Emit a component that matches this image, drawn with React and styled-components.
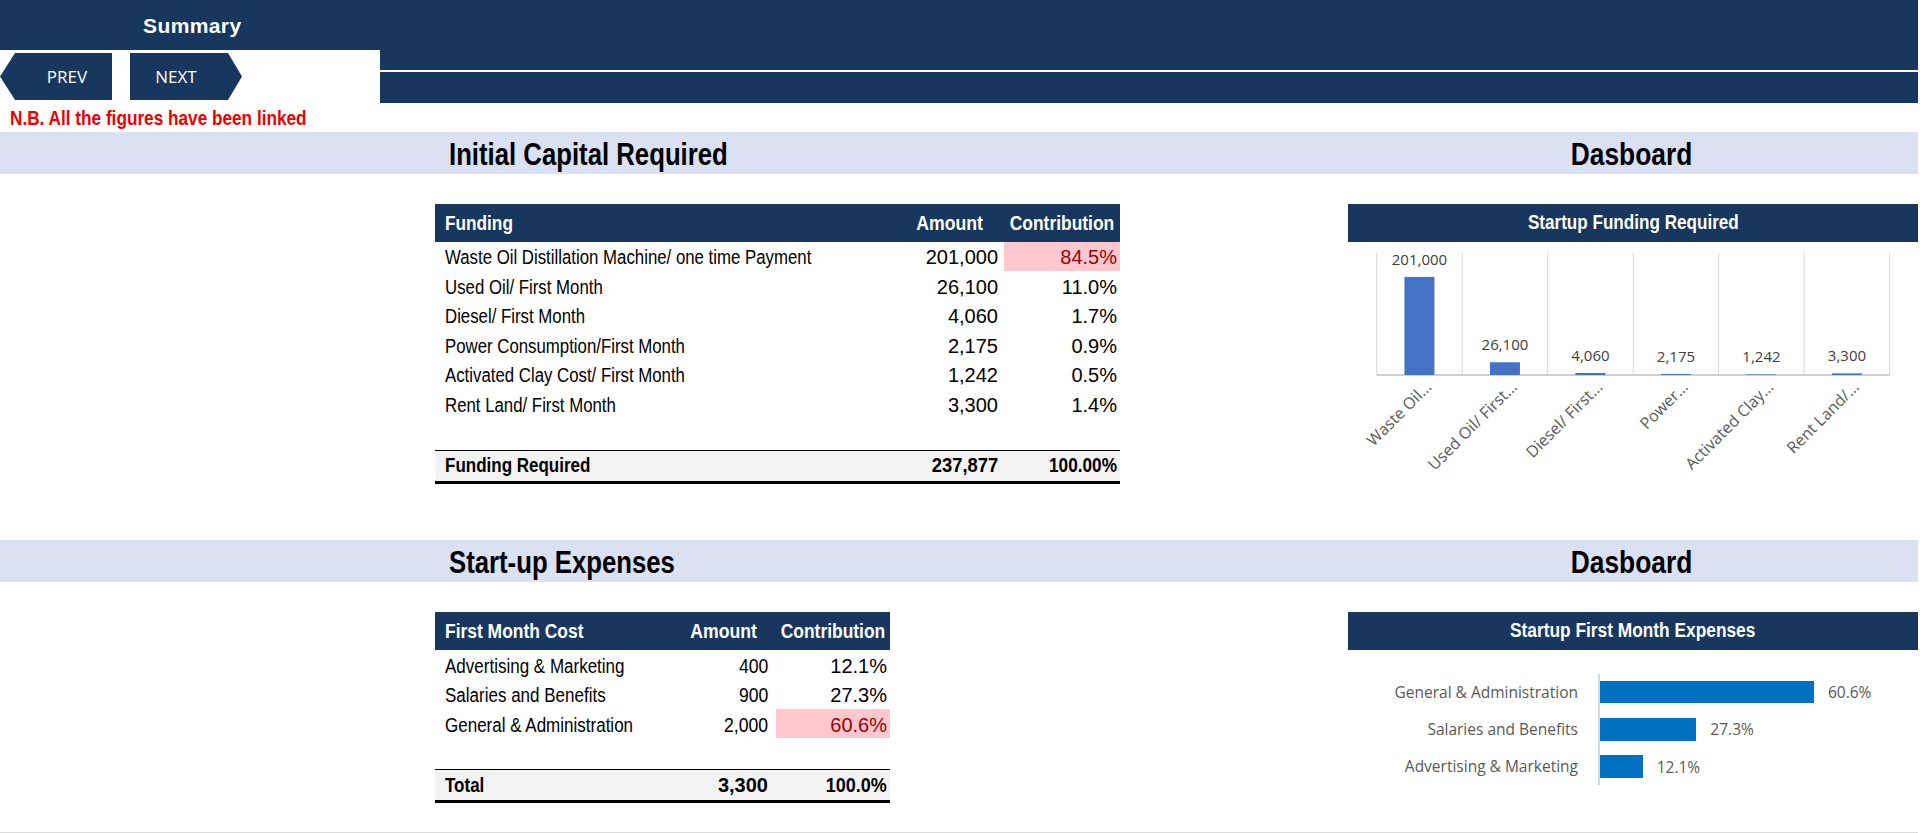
import styled, { createGlobalStyle } from 'styled-components';

const navy = '#17375e';
const sans = '"Liberation Sans", Arial, sans-serif';
const chartFont = '"Open Sans", "Noto Sans", sans-serif';

const GlobalStyle = createGlobalStyle`
  html, body {
    margin: 0;
    padding: 0;
    background: #fff;
  }

  body {
    font-family: ${sans};
  }
`;

// Arial Narrow is not installed, so condensed text is Liberation Sans squeezed sideways
const Squeeze = styled.span`
  display: inline-block;
  white-space: nowrap;
  transform: scaleX(${p => p.$x || 0.83});
  transform-origin: ${p => p.$origin || 'left'} center;
`;

const Page = styled.div`
  width: 1918px;
  height: 832px;
  border-bottom: 1px solid #dcdcdc;
  overflow: hidden;
`;

const TopBand = styled.div`
  height: 50px;
  background: ${navy};
  padding: 2px 0 0 143px;
  box-sizing: border-box;
  font-weight: bold;
  font-size: 21px;
  line-height: 48px;
  letter-spacing: 0.4px;
  color: #fff;
`;

const NavRow = styled.div`
  display: flex;
  height: 53px;
`;

const NavButtons = styled.div`
  width: 380px;
  display: flex;
  gap: 18px;
  padding-top: 3px;
  box-sizing: border-box;
`;

const NavButton = styled.div`
  width: 112px;
  height: 47px;
  background: ${navy};
  color: #fff;
  font-family: ${chartFont};
  font-size: 17px;
  display: flex;
  align-items: center;
  justify-content: center;
  box-sizing: border-box;
  padding: ${p => (p.$dir === 'prev' ? '0 0 0 22px' : '0 20px 0 0')};
  clip-path: ${p =>
    p.$dir === 'prev'
      ? 'polygon(15px 0, 100% 0, 100% 100%, 15px 100%, 0 50%)'
      : 'polygon(0 0, calc(100% - 14px) 0, 100% 50%, calc(100% - 14px) 100%, 0 100%)'};
`;

const NavStrip = styled.div`
  flex: 1;
  display: flex;
  flex-direction: column;
  gap: 2px;
  margin-top: -3px;

  .upper {
    height: 23px;
    background: ${navy};
  }

  .lower {
    flex: 1;
    background: ${navy};
  }
`;

const Note = styled.div`
  height: 29px;
  padding: 2px 0 0 10px;
  box-sizing: border-box;
  font-weight: bold;
  font-size: 20px;
  line-height: 27px;
  color: #ee0000;
`;

const Columns = styled.div`
  display: grid;
  grid-template-columns: 435px 913px 570px;
`;

const Band = styled(Columns)`
  height: 42px;
  padding-top: 3px;
  box-sizing: border-box;
  background: #d9e1f2;
  font-weight: bold;
  font-size: 31px;
  line-height: 39px;
  color: #000;

  .left-title {
    padding-left: 14px;
  }

  .right-title {
    text-align: center;
    padding-right: 4px;
  }
`;

const Body = styled(Columns)`
  height: ${p => p.$height}px;
  padding-top: 30px;
  box-sizing: border-box;
`;

const Table = styled.div`
  width: ${p => p.$width}px;
  font-size: 20px;
  color: #000;
`;

const Row = styled.div`
  display: grid;
  grid-template-columns: ${p => p.$cols};
  height: 29.5px;
  align-items: stretch;
`;

const HeadRow = styled(Row)`
  height: 37.5px;
  background: ${navy};
  color: #fff;
  font-weight: bold;
  font-size: 21px;
`;

const Spacer = styled.div`
  height: 31px;
`;

const TotalRow = styled(Row)`
  height: 34px;
  background: #f2f2f2;
  border-top: 1px solid #000;
  border-bottom: 3px solid #000;
  box-sizing: border-box;
  font-weight: bold;
`;

const Cell = styled.div`
  display: flex;
  align-items: center;
  justify-content: ${p => (p.$align === 'right' ? 'flex-end' : p.$align === 'center' ? 'center' : 'flex-start')};
  padding: ${p => p.$pad || '0'};
  background: ${p => (p.$pink ? '#ffc7ce' : 'transparent')};
  color: ${p => (p.$pink ? '#9c0006' : 'inherit')};
  white-space: nowrap;
`;

const ChartBox = styled.div`
  width: 570px;
`;

const ChartHead = styled.div`
  height: 37.5px;
  background: ${navy};
  color: #fff;
  font-weight: bold;
  font-size: 20px;
  line-height: 37.5px;
  text-align: center;
`;

const ColumnSvg = styled.svg`
  display: block;
  font-family: ${chartFont};
`;

const BarList = styled.div`
  padding-top: 24px;
  font-family: ${chartFont};
  font-size: 15.5px;
  color: #595959;
`;

const BarRow = styled.div`
  display: grid;
  grid-template-columns: 250px 1fr;
  height: 37.3px;
`;

const BarLabel = styled.div`
  text-align: right;
  padding-right: 20px;
  line-height: 37.3px;
  white-space: nowrap;
`;

const BarPlot = styled.div`
  display: flex;
  align-items: center;
  gap: 14px;
  border-left: 2px solid #d9d9d9;
`;

const Bar = styled.div`
  height: 22.5px;
  background: #0070c0;
`;

const funding = [
  { name: 'Waste Oil Distillation Machine/ one time Payment', short: 'Waste Oil...', amount: '201,000', value: 201000, pct: '84.5%', pink: true },
  { name: 'Used Oil/ First Month', short: 'Used Oil/ First...', amount: '26,100', value: 26100, pct: '11.0%' },
  { name: 'Diesel/ First Month', short: 'Diesel/ First...', amount: '4,060', value: 4060, pct: '1.7%' },
  { name: 'Power Consumption/First Month', short: 'Power...', amount: '2,175', value: 2175, pct: '0.9%' },
  { name: 'Activated Clay Cost/ First Month', short: 'Activated Clay...', amount: '1,242', value: 1242, pct: '0.5%' },
  { name: 'Rent Land/ First Month', short: 'Rent Land/...', amount: '3,300', value: 3300, pct: '1.4%' },
];

const expenses = [
  { name: 'Advertising & Marketing', amount: '400', pct: '12.1%', value: 12.1 },
  { name: 'Salaries and Benefits', amount: '900', pct: '27.3%', value: 27.3 },
  { name: 'General & Administration', amount: '2,000', pct: '60.6%', value: 60.6, pink: true },
];

const FundingChart = () => {
  const left = 28.7;
  const step = 85.5;
  const top = 11;
  const base = 133;
  const max = 250000;

  return (
    <ColumnSvg width='570' height='260' viewBox='0 0 570 260'>
      {Array.from({ length: 7 }).map((_, i) => (
        <line key={i} x1={left + i * step} x2={left + i * step} y1={top} y2={base} stroke='#d9d9d9' strokeWidth='1' />
      ))}
      <line x1={left} x2={left + 6 * step} y1={base} y2={base} stroke='#bfbfbf' strokeWidth='1.5' />
      {funding.map((item, i) => {
        const cx = left + step / 2 + i * step;
        const h = (item.value / max) * (base - top);
        const lx = cx + 13;
        const ly = 146;
        return (
          <g key={item.short}>
            <rect x={cx - 15} y={base - h} width='30' height={h} fill='#4472c4' />
            <text x={cx} y={base - h - 12} textAnchor='middle' fontSize='15' fill='#404040'>
              {item.amount}
            </text>
            <text x={lx} y={ly} textAnchor='end' fontSize='16' fill='#595959' transform={`rotate(-45 ${lx} ${ly})`}>
              {item.short}
            </text>
          </g>
        );
      })}
    </ColumnSvg>
  );
};

const App = () => {
  const cols1 = '460px 109px 116px';
  const cols2 = '236px 105px 114px';

  return (
    <Page>
      <GlobalStyle />
      <TopBand>Summary</TopBand>
      <NavRow>
        <NavButtons>
          <NavButton $dir='prev'>PREV</NavButton>
          <NavButton $dir='next'>NEXT</NavButton>
        </NavButtons>
        <NavStrip>
          <div className='upper' />
          <div className='lower' />
        </NavStrip>
      </NavRow>
      <Note>
        <Squeeze $x={0.86}>N.B. All the figures have been linked</Squeeze>
      </Note>

      <Band>
        <div />
        <div className='left-title'>
          <Squeeze>Initial Capital Required</Squeeze>
        </div>
        <div className='right-title'>
          <Squeeze $x={0.85} $origin='center'>Dasboard</Squeeze>
        </div>
      </Band>
      <Body $height={366}>
        <div />
        <Table $width={685}>
          <HeadRow $cols={cols1}>
            <Cell $pad='0 0 0 10px'>
              <Squeeze $x={0.82}>Funding</Squeeze>
            </Cell>
            <Cell $align='center'>
              <Squeeze $x={0.84} $origin='center'>Amount</Squeeze>
            </Cell>
            <Cell $align='center'>
              <Squeeze $x={0.83} $origin='center'>Contribution</Squeeze>
            </Cell>
          </HeadRow>
          {funding.map(item => (
            <Row key={item.name} $cols={cols1}>
              <Cell $pad='3px 0 0 10px'>
                <Squeeze $x={0.84}>{item.name}</Squeeze>
              </Cell>
              <Cell $align='right' $pad='3px 6px 0 0'>{item.amount}</Cell>
              <Cell $align='right' $pad='3px 3px 0 0' $pink={item.pink}>{item.pct}</Cell>
            </Row>
          ))}
          <Spacer />
          <TotalRow $cols={cols1}>
            <Cell $pad='0 0 0 10px'>
              <Squeeze $x={0.85}>Funding Required</Squeeze>
            </Cell>
            <Cell $align='right' $pad='0 6px 0 0'>
              <Squeeze $x={0.92} $origin='right'>237,877</Squeeze>
            </Cell>
            <Cell $align='right' $pad='0 3px 0 0'>
              <Squeeze $x={0.86} $origin='right'>100.00%</Squeeze>
            </Cell>
          </TotalRow>
        </Table>
        <ChartBox>
          <ChartHead>
            <Squeeze $x={0.855} $origin='center'>Startup Funding Required</Squeeze>
          </ChartHead>
          <FundingChart />
        </ChartBox>
      </Body>

      <Band>
        <div />
        <div className='left-title'>
          <Squeeze>Start-up Expenses</Squeeze>
        </div>
        <div className='right-title'>
          <Squeeze $x={0.85} $origin='center'>Dasboard</Squeeze>
        </div>
      </Band>
      <Body $height={250}>
        <div />
        <Table $width={455}>
          <HeadRow $cols={cols2}>
            <Cell $pad='0 0 0 10px'>
              <Squeeze $x={0.83}>First Month Cost</Squeeze>
            </Cell>
            <Cell $align='center'>
              <Squeeze $x={0.84} $origin='center'>Amount</Squeeze>
            </Cell>
            <Cell $align='center'>
              <Squeeze $x={0.83} $origin='center'>Contribution</Squeeze>
            </Cell>
          </HeadRow>
          {expenses.map(item => (
            <Row key={item.name} $cols={cols2}>
              <Cell $pad='4px 0 0 10px'>
                <Squeeze $x={0.85}>{item.name}</Squeeze>
              </Cell>
              <Cell $align='right' $pad='4px 8px 0 0'>
                <Squeeze $x={0.88} $origin='right'>{item.amount}</Squeeze>
              </Cell>
              <Cell $align='right' $pad='4px 3px 0 0' $pink={item.pink}>{item.pct}</Cell>
            </Row>
          ))}
          <Spacer />
          <TotalRow $cols={cols2}>
            <Cell $pad='0 0 0 10px'>
              <Squeeze $x={0.85}>Total</Squeeze>
            </Cell>
            <Cell $align='right' $pad='0 8px 0 0'>3,300</Cell>
            <Cell $align='right' $pad='0 3px 0 0'>
              <Squeeze $x={0.9} $origin='right'>100.0%</Squeeze>
            </Cell>
          </TotalRow>
        </Table>
        <ChartBox>
          <ChartHead>
            <Squeeze $x={0.866} $origin='center'>Startup First Month Expenses</Squeeze>
          </ChartHead>
          <BarList>
            {[...expenses].reverse().map(item => (
              <BarRow key={item.name}>
                <BarLabel>{item.name}</BarLabel>
                <BarPlot>
                  <Bar style={{ width: `${item.value * 3.53}px` }} />
                  <span>{item.pct}</span>
                </BarPlot>
              </BarRow>
            ))}
          </BarList>
        </ChartBox>
      </Body>
    </Page>
  );
};

export default App;
